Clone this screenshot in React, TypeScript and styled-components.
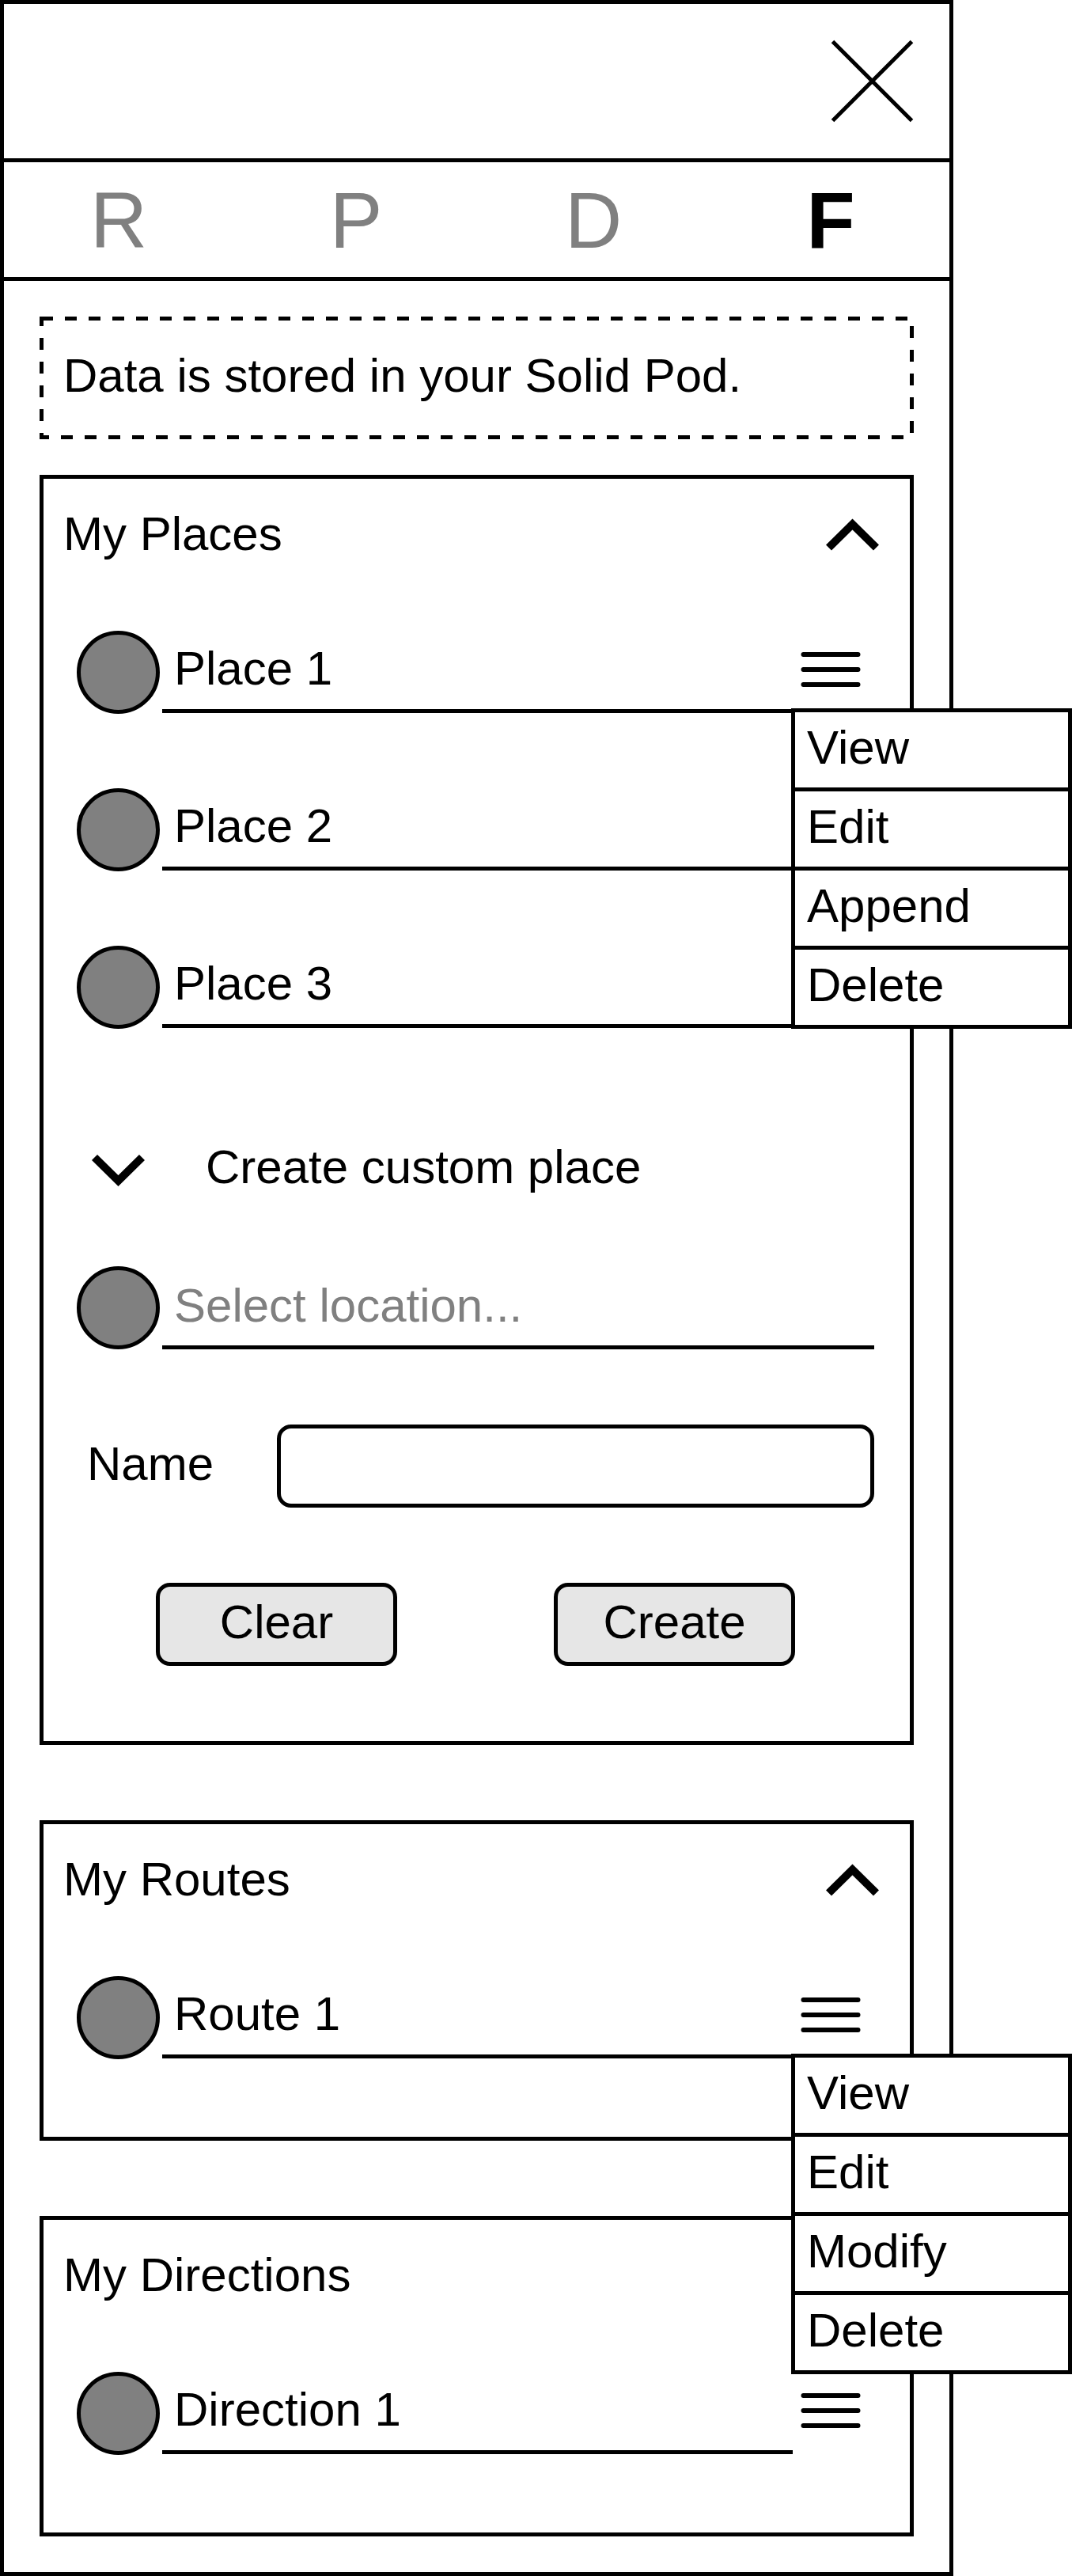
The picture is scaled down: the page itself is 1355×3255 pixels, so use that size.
import { useState } from "react";
import type { ReactNode } from "react";
import styled, { createGlobalStyle } from "styled-components";

const INK = "#000000";
const MUTED = "#808080";
const FILL = "#e6e6e6";
const LINE = "5px";

const GlobalStyle = createGlobalStyle`
  *, *::before, *::after {
    box-sizing: border-box;
  }

  body {
    margin: 0;
    background: #ffffff;
    color: ${INK};
    font-family: "Liberation Sans", Arial, Helvetica, sans-serif;
    font-size: 60px;
    line-height: 70px;
  }

  button,
  input {
    margin: 0;
    padding: 0;
    border: 0;
    border-radius: 0;
    background: none;
    color: inherit;
    font: inherit;
  }

  button {
    cursor: pointer;
  }
`;

const Panel = styled.main`
  margin-right: 150px;
  border: ${LINE} solid ${INK};
`;

const TopBar = styled.header`
  display: flex;
  align-items: center;
  justify-content: flex-end;
  height: 200px;
  padding: 0 45px;
  border-bottom: ${LINE} solid ${INK};
`;

const IconButton = styled.button`
  display: flex;
  flex: none;
  align-items: center;
  justify-content: center;
`;

const Tabs = styled.nav`
  display: grid;
  grid-template-columns: repeat(4, 1fr);
  height: 150px;
  margin-left: -5px;
  border-bottom: ${LINE} solid ${INK};
`;

const Tab = styled.button<{ $active: boolean }>`
  color: ${({ $active }) => ($active ? INK : MUTED)};
  font-size: 100px;
  font-weight: ${({ $active }) => ($active ? 700 : 400)};
  line-height: 120px;
`;

const Content = styled.div`
  display: flex;
  flex-direction: column;
  gap: 45px;
  padding: 45px;
`;

/* Dashed frame: 15px dashes and 15px gaps, running clockwise from the top left. */
const Notice = styled.p`
  display: flex;
  align-items: center;
  height: 155px;
  margin: 0;
  padding: 0 30px 6px;
  background:
    linear-gradient(90deg, ${INK} 50%, transparent 0) 2px 0 / 30px 5px repeat-x,
    linear-gradient(${INK} 50%, transparent 0) 100% 12px / 5px 30px repeat-y,
    linear-gradient(90deg, ${INK} 50%, transparent 0) -3px 100% / 30px 5px repeat-x,
    linear-gradient(${INK} 50%, transparent 0) 0 -3px / 5px 30px repeat-y;
`;

const Cards = styled.div`
  display: flex;
  flex-direction: column;
  gap: 95px;
`;

const CardFrame = styled.section`
  padding-bottom: 95px;
  border: ${LINE} solid ${INK};
`;

const CardHeader = styled.div`
  display: flex;
  align-items: center;
  justify-content: space-between;
  height: 140px;
  padding: 0 39px 0 25px;
`;

const CardTitle = styled.h2`
  margin: 0;
  font-size: 60px;
  font-weight: 400;
`;

const List = styled.ul`
  display: flex;
  flex-direction: column;
  gap: 94px;
  margin: 0;
  padding: 52px 45px 3px 42px;
  list-style: none;
`;

const Row = styled.li`
  position: relative;
  display: flex;
  gap: 3px;
  height: 105px;
`;

const Dot = styled.span`
  flex: none;
  width: 105px;
  height: 105px;
  border: ${LINE} solid ${INK};
  border-radius: 50%;
  background: ${MUTED};
`;

const RowLabel = styled.span`
  display: flex;
  flex: 1;
  align-items: center;
  height: 104px;
  padding: 0 15px 4px;
  border-bottom: ${LINE} solid ${INK};
`;

const RowAction = styled(IconButton)`
  width: 100px;
  height: 98px;
  padding-right: 10px;
`;

const Menu = styled.ul`
  position: absolute;
  top: 98px;
  right: -250px;
  z-index: 2;
  width: 355px;
  margin: 0;
  padding: 0;
  border: ${LINE} solid ${INK};
  background: #ffffff;
  list-style: none;
`;

const MenuItem = styled.li`
  & + & {
    border-top: ${LINE} solid ${INK};
  }
`;

const MenuButton = styled.button`
  display: block;
  width: 100%;
  height: 95px;
  padding: 0 15px 6px;
  text-align: left;
`;

const Form = styled.form`
  padding: 102px 45px 0 42px;
`;

const FormToggle = styled.button`
  display: flex;
  align-items: center;
  gap: 77px;
  width: 100%;
  height: 140px;
  padding: 0 19px;
  text-align: left;
`;

const LocationField = styled.div`
  display: flex;
  gap: 3px;
  margin-top: 55px;
`;

const LocationInput = styled.input`
  flex: 1;
  min-width: 0;
  height: 105px;
  padding: 0 15px 2px;
  border-bottom: ${LINE} solid ${INK};

  &::placeholder {
    color: ${MUTED};
    opacity: 1;
  }
`;

const NameField = styled.div`
  display: grid;
  grid-template-columns: 253px 1fr;
  align-items: center;
  margin-top: 95px;
`;

const NameLabel = styled.label`
  padding: 0 13px 6px;
`;

const NameInput = styled.input`
  width: 100%;
  height: 105px;
  padding: 0 15px 6px;
  border: ${LINE} solid ${INK};
  border-radius: 18px;
`;

const Actions = styled.div`
  display: flex;
  justify-content: space-between;
  margin-top: 95px;
  padding: 0 100px;
`;

const ActionButton = styled.button`
  width: 305px;
  height: 105px;
  padding-bottom: 6px;
  border: ${LINE} solid ${INK};
  border-radius: 18px;
  background: ${FILL};
`;

const CloseIcon = () => (
  <svg width="105" height="105" viewBox="0 0 105 105" fill="none" stroke={INK} strokeWidth="5" aria-hidden="true">
    <path d="M2.5 2.5 102.5 102.5M102.5 2.5 2.5 102.5" />
  </svg>
);

const ChevronUp = () => (
  <svg width="67" height="42" viewBox="0 0 67 42" fill="none" stroke={INK} strokeWidth="10" aria-hidden="true">
    <path d="M3.5 38 33.5 8.5 63.5 38" />
  </svg>
);

const ChevronDown = () => (
  <svg width="67" height="50" viewBox="0 0 67 50" fill="none" stroke={INK} strokeWidth="10" aria-hidden="true">
    <path d="M3.5 12.5 33.5 42 63.5 12.5" />
  </svg>
);

const MenuIcon = () => (
  <svg
    width="76"
    height="44"
    viewBox="0 0 76 44"
    fill="none"
    stroke={INK}
    strokeWidth="6"
    strokeLinecap="round"
    aria-hidden="true"
  >
    <path d="M3.5 3H72.5M3.5 22H72.5M3.5 41H72.5" />
  </svg>
);

type Item = { name: string; menu?: string[] };

const places: Item[] = [
  { name: "Place 1", menu: ["View", "Edit", "Append", "Delete"] },
  { name: "Place 2" },
  { name: "Place 3" },
];
const routes: Item[] = [{ name: "Route 1", menu: ["View", "Edit", "Modify", "Delete"] }];
const directions: Item[] = [{ name: "Direction 1" }];

function Card({ title, items, children }: { title: string; items: Item[]; children?: ReactNode }) {
  return (
    <CardFrame>
      <CardHeader>
        <CardTitle>{title}</CardTitle>
        <IconButton type="button" aria-label={`Collapse ${title}`}>
          <ChevronUp />
        </IconButton>
      </CardHeader>
      <List>
        {items.map(({ name, menu }) => (
          <Row key={name}>
            <Dot />
            <RowLabel>{name}</RowLabel>
            <RowAction type="button" aria-label={`Actions for ${name}`}>
              <MenuIcon />
            </RowAction>
            {menu && (
              <Menu>
                {menu.map((action) => (
                  <MenuItem key={action}>
                    <MenuButton type="button">{action}</MenuButton>
                  </MenuItem>
                ))}
              </Menu>
            )}
          </Row>
        ))}
      </List>
      {children}
    </CardFrame>
  );
}

export default function App() {
  const [tab, setTab] = useState("F");
  const [location, setLocation] = useState("");
  const [name, setName] = useState("");

  const clear = () => {
    setLocation("");
    setName("");
  };

  return (
    <>
      <GlobalStyle />
      <Panel>
        <TopBar>
          <IconButton type="button" aria-label="Close">
            <CloseIcon />
          </IconButton>
        </TopBar>
        <Tabs>
          {["R", "P", "D", "F"].map((letter) => (
            <Tab key={letter} type="button" $active={tab === letter} onClick={() => setTab(letter)}>
              {letter}
            </Tab>
          ))}
        </Tabs>
        <Content>
          <Notice>Data is stored in your Solid Pod.</Notice>
          <Cards>
            <Card title="My Places" items={places}>
              <Form onSubmit={(event) => event.preventDefault()}>
                <FormToggle type="button">
                  <ChevronDown />
                  Create custom place
                </FormToggle>
                <LocationField>
                  <Dot />
                  <LocationInput
                    aria-label="Location"
                    placeholder="Select location..."
                    value={location}
                    onChange={(event) => setLocation(event.target.value)}
                  />
                </LocationField>
                <NameField>
                  <NameLabel htmlFor="place-name">Name</NameLabel>
                  <NameInput id="place-name" value={name} onChange={(event) => setName(event.target.value)} />
                </NameField>
                <Actions>
                  <ActionButton type="button" onClick={clear}>
                    Clear
                  </ActionButton>
                  <ActionButton type="submit">Create</ActionButton>
                </Actions>
              </Form>
            </Card>
            <Card title="My Routes" items={routes} />
            <Card title="My Directions" items={directions} />
          </Cards>
        </Content>
      </Panel>
    </>
  );
}
